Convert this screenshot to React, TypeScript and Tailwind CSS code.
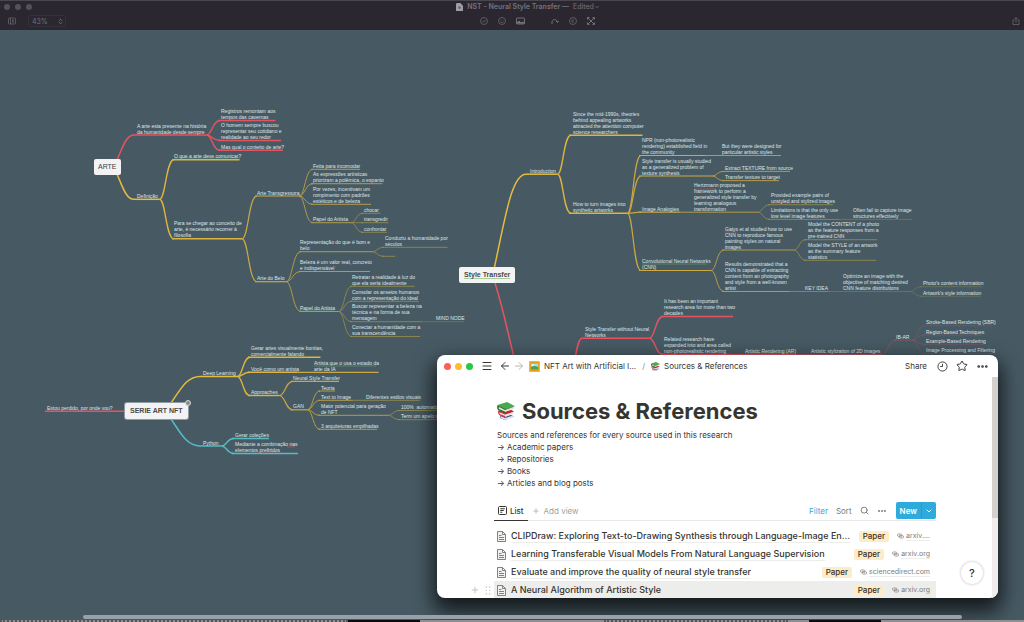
import React from "react";
import {
  ArrowLeft,
  ArrowRight,
  ChevronDown,
  ChevronsUpDown,
  Menu,
  MoreHorizontal,
  Plus,
  Search,
  Star,
} from "lucide-react";
import clsx from "clsx";

type Topic = {
  // start and end of the underline, its height, and where the text begins
  x1: number;
  x2: number;
  y: number;
  tx: number;
  text: string;
  children?: Topic[];
};

const t = (
  x1: number,
  x2: number,
  y: number,
  tx: number,
  text: string,
  children: Topic[] = []
): Topic => ({ x1, x2, y, tx, text, children });

const yellow = ["#e6bc3c", "#dcb43e", "#cba940", "#b39b45", "#9a8f4a", "#84844f", "#797f54"];
const red = ["#ea5260", "#e35461", "#d85562", "#a95661", "#905661", "#85575f", "#85575f"];
const teal = ["#55bcc3", "#55bcc3"];
const widths = [1.5, 1.4, 1.2, 1, 0.8, 0.6, 0.6];

type Branch = {
  from: [number, number];
  colors: string[];
  topic: Topic;
};

const branches: Branch[] = [
  {
    from: [117, 160],
    colors: red,
    topic: t(134, 206.5, 135, 137, "A arte esta presente na história\nda humanidade desde sempre", [
      t(218, 275.5, 120.5, 221, "Registros remontam aos\ntempos das cavernas"),
      t(218, 281, 140.5, 221, "O homem sempre buscou\nrepresentar seu cotidiano e\nrealidade ao seu redor"),
      t(218, 283, 150.2, 221, "Mas qual o conteito de arte?"),
    ]),
  },
  {
    from: [117, 174],
    colors: yellow,
    topic: t(134, 159.5, 199.3, 137, "Definição", [
      t(172, 239.5, 159.7, 174, "O que a arte deve comunicar?"),
      t(172, 242, 238.8, 174, "Para se chegar ao conceito de\narte, é necessário recorrer à\nfilosofia", [
        t(255, 299, 196, 257, "Arte Transgressora", [
          t(311, 360, 169.3, 313, "Feita para incomodar"),
          t(311, 382.5, 183.7, 313, "As expressões artísticas\npriorizam a polêmica, o espanto"),
          t(311, 371, 204.3, 313, "Por vezes, incentivam um\nrompimento com padrões\nestéticos e de beleza"),
          t(311, 351, 222.7, 313, "Papel do Artista", [
            t(361, 380.5, 213.3, 364, "chocar"),
            t(361, 388.5, 222.7, 364, "transgredir"),
            t(361, 387, 232.3, 364, "confrontar"),
          ]),
        ]),
        t(255, 286, 281.7, 257, "Arte do Belo", [
          t(299, 372, 251.7, 300, "Representação do que é bom e\nbelo", [
            t(382, 447.5, 247.3, 385, "Conduziu a humanidade por\nséculos"),
            t(382, 395, 256.3, 385, ""),
          ]),
          t(299, 370, 271.5, 300, "Beleza é um valor real, concreto\ne indispensável"),
          t(299, 338.5, 311.5, 300, "Papel do Artista", [
            t(350, 414.5, 286.3, 352, "Retratar a realidade à luz do\nque ela seria idealmente"),
            t(350, 418.5, 301.3, 352, "Consolar os anseios humanos\ncom a representação do ideal"),
            t(350, 420, 321.7, 352, "Buscar representar a beleza na\ntécnica e na forma de sua\nmensagem", [
              t(420, 464, 321.7, 436, "MIND NODE"),
            ]),
            t(350, 420, 336.5, 352, "Conectar a humanidade com a\nsua transcendência"),
          ]),
        ]),
      ]),
    ]),
  },
  {
    from: [125, 411.3],
    colors: red,
    topic: t(125, 45, 411.3, 47, "Estou perdido, por onde vou?"),
  },
  {
    from: [171, 403],
    colors: yellow,
    topic: t(200, 237.5, 376.5, 203, "Deep Learning", [
      t(248, 320.5, 357.3, 251, "Gerar artes visualmente bonitas,\ncomercialmente falando"),
      t(248, 297, 372.3, 251, "Você como um artista", [
        t(297, 378.5, 372.3, 314, "Artista que o usa o estado da\narte da IA"),
      ]),
      t(248, 279.5, 395.5, 251, "Approaches", [
        t(291, 339, 381.4, 293, "Neural Style Transfer"),
        t(291, 307.5, 409.8, 293, "GAN", [
          t(318, 335, 391, 321, "Teoria"),
          t(318, 351, 400.3, 321, "Text to Image", [
            t(351, 420, 400.3, 366, "Diferentes estilos visuais"),
          ]),
          t(318, 388, 415.3, 321, "Maior potencial para geração\nde NFT", [
            t(398, 450, 410.5, 401, "100%  automatizado"),
            t(398, 450, 419.7, 401, "Term um apelo maior"),
          ]),
          t(318, 377, 429.3, 321, "3 arquiteturas empilhadas"),
        ]),
      ]),
    ]),
  },
  {
    from: [171, 419],
    colors: teal,
    topic: t(200, 221.5, 446, 203, "Python", [
      t(232, 269, 438.5, 235, "Gerar coleções"),
      t(232, 298, 453.5, 235, "Mediante a combinação nas\nelementos prefiridos"),
    ]),
  },
  {
    from: [494.5, 267],
    colors: yellow,
    topic: t(526, 557.5, 174.2, 530, "Introduction", [
      t(569, 642.5, 135.2, 573, "Since the mid-1990s, theories\nbehind appealing artworks\nattracted the attention computer\nscience researchers"),
      t(569, 627.5, 213.3, 573, "How to turn images into\nsynthetic artworks", [
        t(639, 706, 155.5, 642, "NPR (non-photorealistic\nrendering) established field in\nthe community", [
          t(706, 781, 155.5, 722, "But they were designed for\nparticular artistic styles"),
        ]),
        t(639, 712, 176, 642, "Style transfer is usually studied\nas a generalized problem of\ntexture synthesis", [
          t(722, 790, 171.4, 725, "Extract TEXTURE from source"),
          t(722, 779, 180.6, 725, "Transfer texture to target"),
        ]),
        t(639, 678, 212.2, 642, "Image Analogies", [
          t(678, 757.5, 212.2, 694, "Hertzmann proposed a\nframework to perform a\ngeneralized style transfer by\nlearning analogous\ntransformation", [
            t(768, 833, 204.7, 771, "Provided example pairs of\nunstyled and stylized images"),
            t(768, 837.5, 219.4, 771, "Limitations is that the only use\nlow level image features", [
              t(837.5, 912, 219.4, 853, "Often fail to capture image\nstructures effectively"),
            ]),
          ]),
        ]),
        t(639, 711, 270.5, 642, "Convolutional Neural Networks\n(CNN)", [
          t(722, 794, 250, 725, "Gatys et al studied how to use\nCNN to reproduce famous\npainting styles on natural\nimages", [
            t(804, 877, 239.7, 808, "Model the CONTENT of a photo\nas the feature responses from a\npre-trained CNN"),
            t(804, 876, 260.3, 808, "Model the STYLE of an artwork\nas the summary feature\nstatistics"),
          ]),
          t(722, 789, 291.5, 725, "Results demonstrated that a\nCNN is capable of extracting\ncontent from an photography\nand style from a well-known\nartist", [
            t(789, 828, 291.5, 805, "KEY IDEA", [
              t(828, 910, 291.5, 843, "Optimize an image with the\nobjective of matching desired\nCNN feature distributions", [
                t(920, 982, 286.7, 923, "Photo's content information"),
                t(920, 981, 296.3, 923, "Artwork's style information"),
              ]),
            ]),
          ]),
        ]),
      ]),
    ]),
  },
  {
    from: [573, 370],
    colors: red,
    topic: t(582, 649.5, 338.2, 585, "Style Transfer without Neural\nNetworks", [
      t(661, 733, 316.5, 664, "It has been an important\nresearch area for more than two\ndecades"),
      t(661, 730, 354.5, 664, "Related research have\nexpanded into and area called\nnon-photorealistic rendering", [
        t(730, 796, 354.5, 745, "Artistic Rendering (AR)", [
          t(796, 882, 354.5, 811, "Artistic stylization of 2D images", [
            t(894, 912, 340.2, 896, "IB-AR", [
              t(923, 992, 325.7, 926, "Stroke-Based Rendering (SBR)"),
              t(923, 982, 335, 926, "Region-Based Techniques"),
              t(923, 984, 344.3, 926, "Example-Based Rendering"),
              t(923, 992, 353.7, 926, "Image Processing and Filtering"),
            ]),
          ]),
        ]),
      ]),
    ]),
  },
];

// spell checker marks: x, width, y, color
const marks: [number, number, number, string][] = [
  [174, 66, 158, "#5d9a6c"],
  [300, 34, 310, "#5d9a6c"],
  [314, 62, 366, "#5d9a6c"],
  [642, 65, 264, "#5d9a6c"],
  [745, 48, 353, "#5d9a6c"],
  [694, 22, 189, "#b5555f"],
  [725, 12, 232, "#b5555f"],
  [287, 8, 447, "#b5555f"],
  [258, 22, 452, "#b5555f"],
  [771, 20, 203, "#b5555f"],
];

const Lines = ({ topic, colors, depth }: { topic: Topic; colors: string[]; depth: number }) => {
  const stroke = colors[Math.min(depth, colors.length - 1)];
  const width = widths[Math.min(depth, widths.length - 1)];

  return (
    <>
      {topic.children?.map((child, index) => {
        const mid = (topic.x2 + child.x1) / 2;
        return (
          <React.Fragment key={index}>
            <path
              d={`M${topic.x2} ${topic.y} C${mid} ${topic.y} ${mid} ${child.y} ${child.x1 + 2} ${child.y}`}
              stroke={colors[Math.min(depth + 1, colors.length - 1)]}
              strokeWidth={widths[Math.min(depth + 1, widths.length - 1)]}
            />
            <Lines topic={child} colors={colors} depth={depth + 1} />
          </React.Fragment>
        );
      })}
      <path d={`M${topic.x1} ${topic.y} H${topic.x2}`} stroke={stroke} strokeWidth={width} />
    </>
  );
};

const Labels = ({ topic }: { topic: Topic }) => (
  <>
    {topic.text && (
      <p
        className="absolute whitespace-pre text-[5px] leading-[6px] text-[#dde4e6]"
        style={{
          left: topic.tx,
          top: Math.floor(topic.y) - 6 * topic.text.split("\n").length,
        }}
      >
        {topic.text}
      </p>
    )}
    {topic.children?.map((child, index) => (
      <Labels key={index} topic={child} />
    ))}
  </>
);

const MindMap = () => (
  <div className="absolute inset-0 overflow-hidden font-['Liberation_Sans',Arial,sans-serif]">
    <svg className="absolute inset-0 h-full w-full" fill="none" aria-hidden="true">
      <path d="M495 283 C505 315 508 335 516 365" stroke="#ea5260" strokeWidth="1.5" />
      {branches.map(({ from, colors, topic }, index) => {
        const dx = topic.x1 - from[0];
        const dy = topic.y - from[1];
        return (
          <g key={index}>
            <path
              d={`M${from[0]} ${from[1]} C${from[0] + dx * 0.35} ${from[1] + dy * 0.55} ${
                from[0] + dx * 0.55
              } ${topic.y} ${topic.x1} ${topic.y}`}
              stroke={colors[0]}
              strokeWidth="1.5"
            />
            <Lines topic={topic} colors={colors} depth={0} />
          </g>
        );
      })}
      {marks.map(([x, width, y, color], index) => (
        <path key={index} d={`M${x} ${y} h${width}`} stroke={color} strokeWidth="0.7" />
      ))}
    </svg>
    {branches.map(({ topic }, index) => (
      <Labels key={index} topic={topic} />
    ))}

    <h2 className="absolute top-[159px] left-[94px] rounded-[2px] bg-[#f3f3f3] px-1 text-[7px] leading-4 text-[#3c3c3c]">
      ARTE
    </h2>
    <h2 className="absolute top-[403px] left-[125px] rounded-[2px] bg-[#f3f3f3] px-[5px] text-[7px] leading-4 font-bold text-[#4a4a4a] ring-1 ring-[#8e9ba2]">
      SERIE ART NFT
    </h2>
    <span className="absolute top-[400px] left-[185px] h-1.5 w-1.5 rounded-full border border-[#d6d6d6] bg-[#8b8b8b]" />
    <h2 className="absolute top-[267px] left-[459px] rounded-[2px] bg-[#f3f3f3] px-[5px] text-[7px] leading-4 font-bold text-[#4a4a4a]">
      <span className="underline decoration-[#a5cfa0]">Style Transfer</span>
    </h2>
  </div>
);

const toolIcon = "h-2 w-2 stroke-[#6b6670] fill-none";

const Toolbar = () => (
  <header className="relative h-[30px] border-t border-[#4a4650] bg-[#2b2731] text-[#77727c]">
    <div className="flex h-3 items-center gap-1 px-1">
      <span className="h-1.5 w-1.5 rounded-full bg-[#55515b]" />
      <span className="ml-px h-1.5 w-1.5 rounded-full bg-[#55515b]" />
      <span className="ml-px h-1.5 w-1.5 rounded-full bg-[#55515b]" />
      <h1 className="flex flex-1 items-center justify-center gap-1 text-[7px] leading-3 font-semibold">
        <svg viewBox="0 0 8 9" className="h-2 w-[7px]">
          <path d="M1 0h4l3 3v6H0V1z" fill="#a09da3" />
          <circle cx="4" cy="5.3" r="1.3" fill="#5a5660" />
        </svg>
        <span>NST - Neural Style Transfer —</span>
        <span className="flex items-center font-normal">
          Edited
          <ChevronDown className="h-[6px] w-[6px]" strokeWidth={3} />
        </span>
      </h1>
    </div>
    <div className="flex h-4 items-center px-2">
      <button aria-label="Outline">
        <svg viewBox="0 0 16 16" className={toolIcon} strokeWidth="1.5">
          <rect x="1" y="2" width="14" height="12" rx="2" />
          <path d="M5 2v12M8 6h4M8 8h4M8 10h4" />
        </svg>
      </button>
      <div className="relative ml-3 flex items-center">
        <select
          aria-label="Zoom"
          className="h-3 w-[38px] appearance-none rounded-[2px] border border-[#35313b] bg-transparent pl-[3px] text-[7px] leading-none text-[#77727c]"
        >
          <option>43%</option>
        </select>
        <ChevronsUpDown className="absolute right-0.5 h-[7px] w-[7px]" strokeWidth={3} />
      </div>
      <div className="flex flex-1 items-center justify-center gap-[10px] pr-1">
        <button aria-label="Tasks">
          <svg viewBox="0 0 16 16" className={toolIcon} strokeWidth="1.6">
            <circle cx="8" cy="8" r="7" />
            <path d="m5 8 2.3 2.5L11 5.5" />
          </svg>
        </button>
        <button aria-label="Stickers">
          <svg viewBox="0 0 16 16" className={toolIcon} strokeWidth="1.6">
            <circle cx="8" cy="8" r="7" />
            <path d="M5 6h1.5M9.5 6H11M5 10q3 2.5 6 0" />
          </svg>
        </button>
        <button aria-label="Image">
          <svg viewBox="0 0 18 16" className="h-2 w-[9px] fill-none stroke-[#7c7781]" strokeWidth="1.8">
            <rect x="1" y="2" width="16" height="12" rx="1.5" />
            <path d="m1 13 5-5 4 4 3-2 4 3" fill="#7c7781" />
          </svg>
        </button>
        <button aria-label="Connect" className="ml-4">
          <svg viewBox="0 0 16 16" className={toolIcon} strokeWidth="2">
            <path d="M2 12C1 3 13 3 13 11M10 8l3 3 3-3" />
            <circle cx="2" cy="12" r="1" />
          </svg>
        </button>
        <button aria-label="Focus">
          <svg viewBox="0 0 16 16" className={toolIcon} strokeWidth="1.6">
            <circle cx="8" cy="8" r="7" />
            <path d="M9 4 5 8l4 4M9 7v2" />
          </svg>
        </button>
        <button aria-label="Arrange">
          <svg viewBox="0 0 16 16" className="h-2 w-2 fill-none stroke-[#7c7781]" strokeWidth="1.8">
            <path d="m2 2 12 12M14 2 2 14M1 5V1h4M11 1h4v4M15 11v4h-4M5 15H1v-4" />
          </svg>
        </button>
      </div>
      <button aria-label="Share map" className="-mr-1">
        <svg viewBox="0 0 16 16" className={toolIcon} strokeWidth="1.6">
          <path d="M5 6H2v9h12V6h-3M8 11V1M5 4l3-3 3 3" />
        </svg>
      </button>
    </div>
  </header>
);

const Books = ({ className }: { className: string }) => (
  <svg viewBox="0 0 36 36" className={className} aria-hidden="true">
    <path d="M6 27 24 24l10 5-18 7-10-4z" fill="#3b4d8f" />
    <path d="m7 28 9 4 17-5v4l-17 5-9-4z" fill="#dfe4ee" />
    <path d="m3 17 22-3 9 5-17 8L3 22z" fill="#c8202c" />
    <path d="m5 20 11 5 17-5v4l-17 6-11-5z" fill="#e9e3e3" />
    <path d="M3 17q-2 5 1 9l12 5v-3L5 24q-1-2 0-4l11 5 1-2z" fill="#dc2f38" />
    <path d="M1 6 20 0l15 8-18 7z" fill="#4aa84e" />
    <path d="m3 9 13 6 18-6v5l-18 6L3 14z" fill="#dfe9dc" />
    <path d="M1 6q-2 6 1 10l14 6v-3L4 14q-1-2 0-4l12 6 19-7V8l-18 6z" fill="#28762f" />
  </svg>
);

const Picture = () => (
  <svg viewBox="0 0 20 20" className="h-[11px] w-[11px]" aria-hidden="true">
    <rect width="20" height="20" rx="1" fill="#f7b924" />
    <rect x="2.5" y="2.5" width="15" height="15" fill="#d58d12" />
    <rect x="3.5" y="4.5" width="13" height="11" fill="#a5def5" />
    <path d="M3.5 11q6-4 13 0v4.5h-13z" fill="#4da24f" />
    <circle cx="7" cy="7.5" r="1.5" fill="#fff" />
  </svg>
);

const PageIcon = () => (
  <svg viewBox="0 0 18 22" className="h-[11px] w-[9px] shrink-0 fill-[#f1f1ef] stroke-[#76746f]" strokeWidth="1.8">
    <path d="M1 1h10l6 6v14H1zM11 1v6h6M4 9h5M4 13h10M4 17h10" />
  </svg>
);

const LinkIcon = () => (
  <svg viewBox="0 0 20 16" className="h-[6px] w-[7px] shrink-0 fill-none stroke-[#8f8d89]" strokeWidth="2">
    <rect x="1" y="2" width="13" height="7" rx="3.5" />
    <rect x="6" y="7" width="13" height="7" rx="3.5" />
    <path d="M5 5.5h6M10 10.5h5" />
  </svg>
);

const references = [
  {
    title: "CLIPDraw: Exploring Text-to-Drawing Synthesis through Language-Image En...",
    link: "arxiv....",
  },
  {
    title: "Learning Transferable Visual Models From Natural Language Supervision",
    link: "arxiv.org",
  },
  {
    title: "Evaluate and improve the quality of neural style transfer",
    link: "sciencedirect.com",
  },
  { title: "A Neural Algorithm of Artistic Style", link: "arxiv.org", active: true },
];

const NotesWindow = () => (
  <section className="absolute top-[355px] left-[437px] h-[243px] w-[561px] overflow-hidden rounded-lg bg-white text-[#37352f] shadow-[0_10px_20px_4px_rgba(0,0,0,0.7)]">
    <div className="flex h-[22px] items-center pr-[9px] pl-[7px] text-[8px]">
      <div className="flex gap-1">
        <span className="h-[7px] w-[7px] rounded-full bg-[#fd5f57]" />
        <span className="h-[7px] w-[7px] rounded-full bg-[#febb2e]" />
        <span className="h-[7px] w-[7px] rounded-full bg-[#28c840]" />
      </div>
      <button aria-label="Menu" className="ml-2">
        <Menu className="h-3 w-3" strokeWidth={2} />
      </button>
      <button aria-label="Back" className="ml-1.5">
        <ArrowLeft className="h-3 w-3" strokeWidth={2} />
      </button>
      <button aria-label="Forward" className="ml-0.5">
        <ArrowRight className="h-3 w-3 text-[#b9b8b5]" strokeWidth={2} />
      </button>
      <nav className="ml-1 flex items-center">
        <Picture />
        <a href="#nft" className="ml-1">
          NFT Art with Artificial I...
        </a>
        <span className="mx-1.5 text-[#8f8d89]">/</span>
        <Books className="h-[9px] w-[9px]" />
        <a href="#sources" className="ml-1">
          Sources &amp; References
        </a>
      </nav>
      <button className="ml-auto">Share</button>
      <button aria-label="Updates" className="ml-[10px]">
        <svg viewBox="0 0 24 24" className="h-[11px] w-[11px] fill-none stroke-current" strokeWidth="2">
          <circle cx="12" cy="12" r="10" />
          <path d="M12 6v6H7" />
        </svg>
      </button>
      <button aria-label="Favorite" className="ml-2">
        <Star className="h-3 w-3" strokeWidth={2} />
      </button>
      <button aria-label="More" className="ml-2">
        <MoreHorizontal className="h-[13px] w-[13px]" strokeWidth={3} />
      </button>
    </div>

    <div className="pr-[62px] pl-[57px]">
      <div className="px-[3px]">
        <h1 className="mt-5 flex items-center gap-[7px] text-[22px] leading-7 font-bold">
          <Books className="h-[18px] w-[18px]" />
          Sources &amp; References
        </h1>
        <div className="mt-1 text-[8px] leading-3">
          <p>Sources and references for every source used in this research</p>
          <p>→ Academic papers</p>
          <p>→ Repositories</p>
          <p>→ Books</p>
          <p>→ Articles and blog posts</p>
        </div>
      </div>

      <div className="mt-3 flex h-5 items-center border-b border-[#e9e9e7] text-[8px] text-[#7d7b77]">
        <button className="-mb-px flex h-5 items-center gap-[3px] border-b border-[#37352f] px-1 font-medium text-[#37352f]">
          <svg viewBox="0 0 18 18" className="h-[9px] w-[9px] fill-none stroke-current" strokeWidth="2">
            <rect x="1" y="1" width="16" height="16" rx="2" />
            <path d="M4.5 5.5h9M4.5 9h7M4.5 12.5h4" />
          </svg>
          List
        </button>
        <button className="ml-1 flex items-center gap-1 text-[#a3a19d]">
          <Plus className="h-2 w-2" strokeWidth={2} />
          Add view
        </button>
        <button className="ml-auto text-[#2eaadc]">Filter</button>
        <button className="ml-2">Sort</button>
        <button aria-label="Search" className="ml-2">
          <Search className="h-[9px] w-[9px]" strokeWidth={2.5} />
        </button>
        <button aria-label="View options" className="ml-2">
          <MoreHorizontal className="h-[10px] w-[10px]" strokeWidth={3} />
        </button>
        <div className="ml-[9px] flex h-[17px] items-center rounded-[2px] bg-[#2eaadc] font-semibold text-white">
          <button className="h-full border-r border-[#2899c8] px-1">New</button>
          <button aria-label="New from template" className="px-[3px]">
            <ChevronDown className="h-2 w-2" strokeWidth={3} />
          </button>
        </div>
      </div>

      <ul className="mt-1.5">
        {references.map(({ title, link, active }) => (
          <li
            key={title}
            className={clsx(
              "relative flex h-[18px] items-center pr-1.5 pl-[3px]",
              active && "bg-[#ededec]"
            )}
          >
            {active && (
              <div className="absolute -left-6 flex items-center gap-[5px] text-[#b9b8b5]">
                <button aria-label="Add row">
                  <Plus className="h-[10px] w-[10px]" strokeWidth={2} />
                </button>
                <button aria-label="Drag row">
                  <svg viewBox="0 0 10 16" className="h-[9px] w-[6px] fill-current">
                    <path d="M1 1h2v2H1zM7 1h2v2H7zM1 7h2v2H1zM7 7h2v2H7zM1 13h2v2H1zM7 13h2v2H7z" />
                  </svg>
                </button>
              </div>
            )}
            <PageIcon />
            <a
              href="#reference"
              className="ml-[5px] border-b border-[#ededec] text-[9px] leading-3 font-medium whitespace-nowrap"
            >
              {title}
            </a>
            <span className="ml-auto rounded-[2px] bg-[#fdecc8] px-1 text-[8px] leading-[11px] font-medium text-[#402c1b]">
              Paper
            </span>
            <a href="#link" className="ml-2 flex items-center gap-0.5 text-[7px] leading-3 text-[#7d7b77]">
              <LinkIcon />
              <span className="border-b border-[#ededec] leading-[9px]">{link}</span>
            </a>
          </li>
        ))}
      </ul>
    </div>

    <div className="absolute top-[22px] right-0 bottom-0 w-[6px] bg-[#efeeec]">
      <div className="h-[141px] bg-[#d3d1cb]" />
    </div>
    <button className="absolute right-[15px] bottom-[14px] h-[22px] w-[22px] rounded-full bg-white text-[11px] font-medium shadow-[0_0_3px_rgba(15,15,15,0.3)]">
      ?
    </button>
  </section>
);

export default function App() {
  return (
    <div className="relative flex min-h-screen flex-col overflow-hidden bg-[#475a64] font-[Inter,sans-serif]">
      <MindMap />
      <Toolbar />
      <NotesWindow />
      <footer className="relative mt-auto">
        <div className="mr-[62px] mb-px ml-[83px] h-1 rounded-full bg-[#98a1a9]" />
        <div className="flex h-0.5 bg-[#8d8f91]">
          <div className="w-[34%] border-t-2 border-dotted border-[#55585c]" />
          <div className="w-[7%] bg-[#0b0a0d]" />
          <div className="w-[18%]" />
          <div className="w-[18%] border-t-2 border-dotted border-[#55585c]" />
          <div className="ml-[2%] w-[7%] bg-[#0b0a0d]" />
        </div>
      </footer>
    </div>
  );
}
